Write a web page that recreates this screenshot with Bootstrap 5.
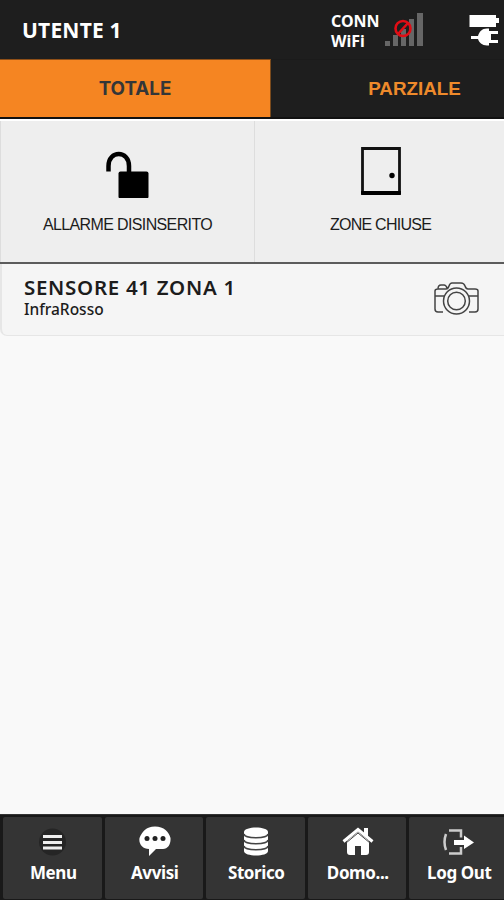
<!DOCTYPE html>
<html lang="it">
<head>
<meta charset="utf-8">
<meta name="viewport" content="width=device-width, initial-scale=1">
<title>Utente 1</title>
<link href="https://cdn.jsdelivr.net/npm/bootstrap@5.3.0/dist/css/bootstrap.min.css" rel="stylesheet">
<style>
body{font-family:"Noto Sans",sans-serif;background:#f9f9f9;color:#1c1c1c;overflow:hidden}
svg{display:block;flex:none}
.topbar{height:59px;background:#1e1e1e;color:#fff;font-weight:700;padding:3px 4px 0 22px}
.user-name{font-size:21px;letter-spacing:.2px}
.conn{font-size:16px;line-height:20px;width:54px;letter-spacing:0;margin-top:-1px}
.mode-tabs{height:60px;background:#1e1e1e;border-bottom:2px solid #111;font-family:"Liberation Sans",Arial,sans-serif;font-weight:700;font-size:18.8px}
.mode-tab{color:#ee8a2b;border:0;border-top:1px solid #1b1b1b;padding-top:2px;text-decoration:none}
.mode-tab.on{width:271px;background:#f58522;color:#333638;border-right:1px solid #7a4a1c;border-top-color:#8f4f17;font-family:Inter,sans-serif;font-size:18.8px}
.mode-tab.off{padding-left:54px}
.status-row{height:145px;background:#eee;border-top:2px solid #fff;border-bottom:2px solid #5c5c5c;font-family:"Liberation Sans",Arial,sans-serif;font-size:16px;letter-spacing:-.63px}
.status-cell{padding-top:25px;border-left:1px solid #ddd}
.status-cell.alarm{width:254px}
.status-cell span{line-height:20px;margin-top:17px;white-space:nowrap}
.status-cell.zones span{letter-spacing:-.75px;padding-left:2px}
.sensor{height:72px;background:#f5f5f5;border:1px solid #e6e6e6;border-width:0 0 1px 2px;border-bottom-left-radius:7px;padding:12px 25px 0 22px}
.sensor-name{font-size:20.5px;font-weight:600;line-height:22px;letter-spacing:.7px}
.sensor-type{font-size:15.5px;font-weight:500;line-height:22px}
.bottom-nav{height:86px;background:#191919;padding:2px 0 1px 3px;gap:3px;color:#fff;font-weight:700;font-size:17px;border-top:1px solid #333}
.nav-cell{background:#343434;flex:0 0 98.5px;padding:9px 0 0 2px;border-radius:2px;color:#fff;text-decoration:none}
.nav-cell span{line-height:24px;margin-top:3px;white-space:nowrap;letter-spacing:-.4px}
</style>
</head>
<body class="d-flex flex-column vh-100">
<header class="topbar d-flex align-items-center">
  <div class="user-name me-auto">UTENTE 1</div>
  <div class="conn">CONN<br>WiFi</div>
  <svg width="40" height="36" viewBox="0 0 40 36"><g fill="#666"><path d="M0 28h5v5H0zM8 22h5v11H8zM16 16h5v17h-5zM24 6h5v27h-5zM32 0h6v33h-6z"/></g><g fill="none" stroke="#e00d15" stroke-width="2.600"><circle cx="18" cy="15.500" r="7.500"/><path d="M13 21 23 10"/></g></svg>
  <svg class="ms-5" width="27" height="32" viewBox="0 0 27 32" overflow="visible"><path fill="#fff" d="M-3.500 0h26.500v3h3v5h-3v4H-3.500zM-2 21h7c1-4 4-7.500 9-7.500h2V16h9v3h-7v6h7v3h-9v2.500h-2c-5 0-8-3-9-6.500h-7z"/></svg>
</header>
<nav class="mode-tabs d-flex">
  <a class="mode-tab on d-flex align-items-center justify-content-center">TOTALE</a>
  <a class="mode-tab off flex-fill d-flex align-items-center justify-content-center">PARZIALE</a>
</nav>
<section class="status-row d-flex">
  <div class="status-cell alarm d-flex flex-column align-items-center">
    <svg width="44" height="52" viewBox="0 0 44 52"><rect x="12.500" y="25.500" width="30" height="27" rx="2"/><path d="M2.500 25.500v-5.500C2.500 4 23 4 23 20v8" fill="none" stroke="#000" stroke-width="4.500"/></svg>
    <span>ALLARME DISINSERITO</span>
  </div>
  <div class="status-cell zones flex-fill d-flex flex-column align-items-center">
    <svg class="ms-1" width="42" height="52" viewBox="0 0 42 52"><path d="M1.500 2.500h37v44h-37z" fill="none" stroke="#111" stroke-width="2.800"/><path d="M.1 45h39.800v4H.1z"/><circle cx="31" cy="29.500" r="2.700"/></svg>
    <span>ZONE CHIUSE</span>
  </div>
</section>
<section class="sensor d-flex justify-content-between">
  <div><div class="sensor-name">SENSORE 41 ZONA 1</div><div class="sensor-type">InfraRosso</div></div>
  <svg class="mt-1" width="45" height="36" viewBox="0 0 45 36" fill="none" stroke="#444" stroke-width="1.500"><path d="M9 32H4q-3 0-3-3V11q0-2 3-2h8q2 0 3-3 1-3 3-3h9q3 0 4 3 1 3 3 3h7q3 0 3 2v18q0 3-3 3h-6M1 16h9M35 16h9M4 9q0-4 3-4h3q2 0 3 3"/><circle cx="22.500" cy="21" r="13"/><circle cx="22.500" cy="21" r="8.800"/></svg>
</section>
<nav class="bottom-nav mt-auto d-flex">
  <a class="nav-cell d-flex flex-column align-items-center"><svg width="32" height="32" viewBox="0 0 32 32"><circle cx="15.500" cy="16" r="13.500" fill="#252525"/><path d="M6 10.500h19M6 16.500h19M6 22h19" stroke="#eee" stroke-width="3"/></svg><span>Menu</span></a>
  <a class="nav-cell d-flex flex-column align-items-center"><svg width="32" height="32" viewBox="0 0 32 32"><path fill="#fff" d="M16 .5C7 .5 3 6 .5 12c-1 6 3 11 9.500 11v7l7-7h7c5 0 8-5 7.500-11C30 6 25 .5 16 .5"/><g fill="#222"><circle cx="8" cy="12.500" r="2.500"/><circle cx="16" cy="12.500" r="2.500"/><circle cx="24" cy="12.500" r="2.500"/></g></svg><span>Avvisi</span></a>
  <a class="nav-cell d-flex flex-column align-items-center"><svg width="32" height="32" viewBox="0 0 32 32"><path fill="#fff" d="M4 6c0-6 24-6 24 0v19c0 6-24 6-24 0z"/><path d="M4 8c1 5 23 5 24 0M4 14c1 5 23 5 24 0M4 20c1 5 23 5 24 0" fill="none" stroke="#444" stroke-width="1.500"/></svg><span>Storico</span></a>
  <a class="nav-cell d-flex flex-column align-items-center"><svg width="32" height="32" viewBox="0 0 32 32"><path fill="#fff" d="m16 6 11 9v11q0 3-3 3h-5v-9h-6v9H8q-3 0-3-3V15z"/><path d="M1.500 15.500 16 3.500l14.500 12" fill="none" stroke="#fff" stroke-width="3"/><path d="m4 17 12-10 12 10" fill="none" stroke="#444"/><path fill="#fff" d="M22 2h4v9l-4-3z"/></svg><span>Domo...</span></a>
  <a class="nav-cell d-flex flex-column align-items-center"><svg width="32" height="32" viewBox="0 0 32 32"><path d="M6 4.500h12v7M18 21v6.500H6M3 8q-3 8 0 16" fill="none" stroke="#ccc" stroke-width="2.500"/><path fill="#fff" d="M11 14h10V9.500L31 16.500 21 23v-4H11z"/></svg><span>Log Out</span></a>
</nav>
<script src="https://cdn.jsdelivr.net/npm/bootstrap@5.3.0/dist/js/bootstrap.bundle.min.js"></script>
</body>
</html>
